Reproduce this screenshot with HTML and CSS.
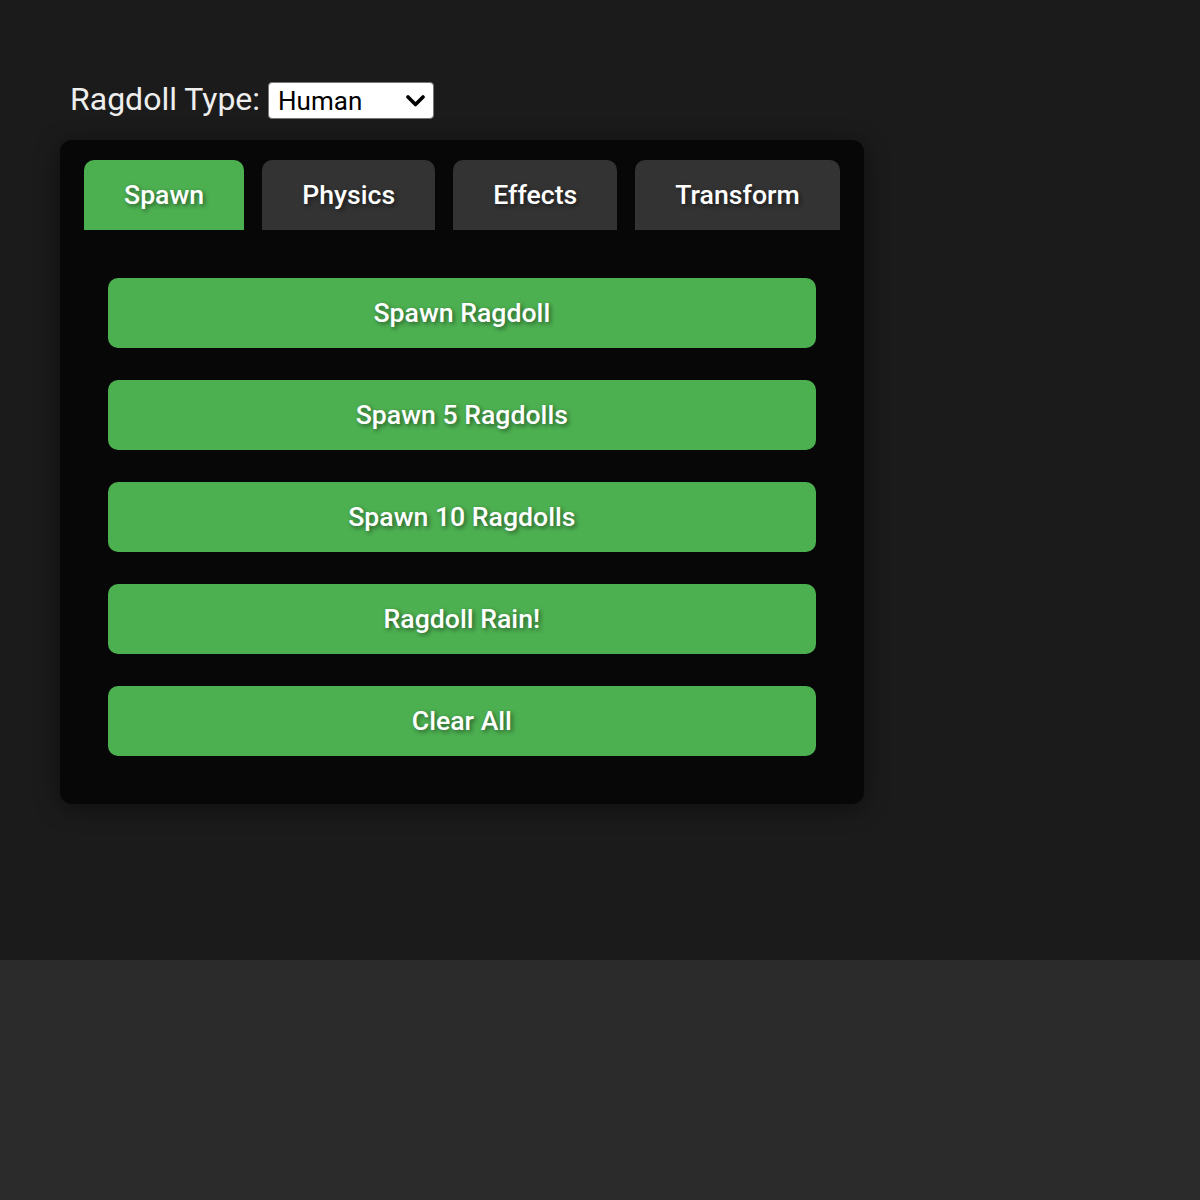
FILE: index.html
```html
<!DOCTYPE html>
<html lang="en">
<head>
<meta charset="utf-8">
<title>Ragdoll Controls</title>
<link rel="stylesheet" href="styles.css">
</head>
<body>
<div class="stage">
  <div class="ui">
    <div class="type-row">
      <label class="type-label" for="ragdollType">Ragdoll Type:</label>
      <select id="ragdollType" class="type-select">
        <option>Human</option>
        <option>Robot</option>
        <option>Stick</option>
      </select>
    </div>
    <div class="panel">
      <div class="tabs">
        <button class="tab active">Spawn</button>
        <button class="tab">Physics</button>
        <button class="tab">Effects</button>
        <button class="tab">Transform</button>
      </div>
      <div class="tab-content">
        <button class="action">Spawn Ragdoll</button>
        <button class="action">Spawn 5 Ragdolls</button>
        <button class="action">Spawn 10 Ragdolls</button>
        <button class="action">Ragdoll Rain!</button>
        <button class="action">Clear All</button>
      </div>
    </div>
  </div>
</div>
</body>
</html>
```
FILE: styles.css
```css
html, body {
  margin: 0;
  padding: 0;
}
body {
  background: #2b2b2b;
  font-family: Roboto, "Liberation Sans", sans-serif;
  height: 1200px;
}
.stage {
  height: 960px;
  background: #1b1b1b;
  padding: 82px 0 0 60px;
  box-sizing: border-box;
}
.ui {
  display: inline-flex;
  flex-direction: column;
  gap: 21px;
}
.type-row {
  display: flex;
  align-items: center;
  gap: 8px;
  padding-left: 10px;
  height: 37px;
}
.type-label {
  color: #eeeeee;
  font-size: 32px;
  font-weight: 400;
  line-height: 37px;
  position: relative;
  top: -1px;
}
.type-select {
  -webkit-appearance: none;
  appearance: none;
  width: 166px;
  height: 37px;
  box-sizing: border-box;
  font-family: Roboto, "Liberation Sans", sans-serif;
  font-size: 26px;
  color: #000;
  background-color: #fff;
  background-image: url("data:image/svg+xml,%3Csvg xmlns='http://www.w3.org/2000/svg' width='19' height='12' viewBox='0 0 19 12'%3E%3Cpath d='M2 2 L9.5 9.5 L17 2' fill='none' stroke='%23000' stroke-width='3.6' stroke-linecap='round' stroke-linejoin='round'/%3E%3C/svg%3E");
  background-repeat: no-repeat;
  background-position: right 8px center;
  background-size: 19px 12px;
  border: 1.5px solid #767676;
  border-radius: 4px;
  padding: 0 34px 0 9px;
}
.panel {
  background: #070707;
  border-radius: 12px;
  padding: 20px 24px 48px;
  box-shadow: 0 4px 24px rgba(0, 0, 0, 0.45);
  width: fit-content;
}
.tabs {
  display: flex;
  gap: 18px;
}
.tab {
  font-family: Roboto, "Liberation Sans", sans-serif;
  font-size: 26.67px;
  font-weight: 500;
  line-height: 30px;
  color: #fff;
  background: #333333;
  border: none;
  border-radius: 10px 10px 0 0;
  padding: 20px 40px;
  text-shadow: 2px 2px 4px rgba(0, 0, 0, 0.45);
  cursor: pointer;
}
.tab.active {
  background: #4caf50;
}
.tab-content {
  display: flex;
  flex-direction: column;
  gap: 32px;
  padding: 48px 24px 0;
}
.action {
  font-family: Roboto, "Liberation Sans", sans-serif;
  font-size: 26.67px;
  font-weight: 500;
  line-height: 30px;
  color: #fff;
  background: #4caf50;
  border: none;
  border-radius: 10px;
  padding: 20px;
  text-shadow: 2px 2px 4px rgba(0, 0, 0, 0.45);
  cursor: pointer;
}
```
